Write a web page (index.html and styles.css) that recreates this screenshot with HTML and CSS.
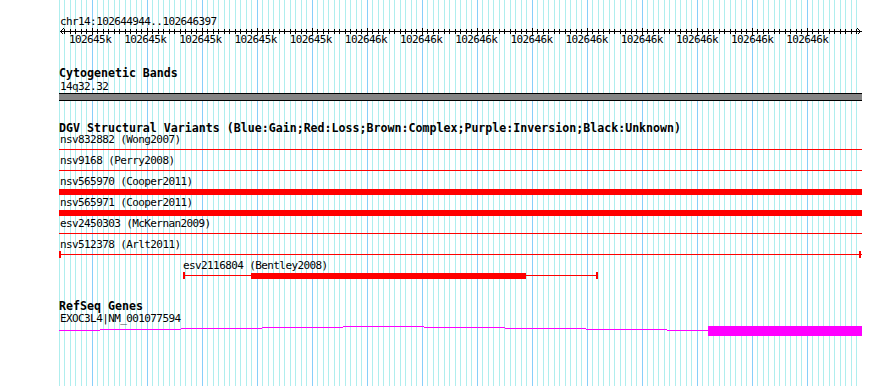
FILE: index.html
```html
<!DOCTYPE html>
<html lang="en">
<head>
<meta charset="utf-8">
<title>GBrowse details - chr14:102644944..102646397</title>
<link rel="stylesheet" href="styles.css">
</head>
<body>
<div class="canvas">
  <div class="ruler">
    <div class="locus">chr14:102644944..102646397</div>
    <svg class="axis" width="890" height="7" viewBox="0 0 890 7" shape-rendering="crispEdges">
      <defs>
        <pattern id="minor" x="59" y="0" width="11" height="7" patternUnits="userSpaceOnUse">
          <rect x="0" y="1" width="1" height="5"/>
          <rect x="5" y="1" width="1" height="5"/>
        </pattern>
        <pattern id="major" x="92" y="0" width="55" height="7" patternUnits="userSpaceOnUse">
          <rect x="0" y="0" width="1" height="7"/>
        </pattern>
      </defs>
      <rect x="64" y="0" width="793" height="7" fill="url(#minor)"/>
      <rect x="92" y="0" width="716" height="7" fill="url(#major)"/>
      <rect x="60" y="3" width="802" height="1"/>
      <path d="M63.5 0.5 L60.5 3.5 L63.5 6.5 M857.5 0.5 L860.5 3.5 L857.5 6.5" fill="none" stroke="#000" stroke-width="1"/>
    </svg>
    <div class="ticks">
      <span>102645k</span><span>102645k</span><span>102645k</span><span>102645k</span><span>102645k</span>
      <span>102646k</span><span>102646k</span><span>102646k</span><span>102646k</span><span>102646k</span>
      <span>102646k</span><span>102646k</span><span>102646k</span><span>102646k</span>
    </div>
  </div>

  <section class="track track-cyto">
    <h2 class="track-title">Cytogenetic Bands</h2>
    <div class="label label-tall">14q32.32</div>
    <div class="band"></div>
  </section>

  <section class="track track-dgv">
    <h2 class="track-title title-tight">DGV Structural Variants (Blue:Gain;Red:Loss;Brown:Complex;Purple:Inversion;Black:Unknown)</h2>
    <div class="row">
      <div class="label">nsv832882 (Wong2007)</div>
      <svg class="glyph" width="890" height="10" shape-rendering="crispEdges"><rect class="loss" x="59" y="4" width="803" height="1"/></svg>
    </div>
    <div class="row">
      <div class="label">nsv9168 (Perry2008)</div>
      <svg class="glyph" width="890" height="10" shape-rendering="crispEdges"><rect class="loss" x="59" y="4" width="803" height="1"/></svg>
    </div>
    <div class="row">
      <div class="label">nsv565970 (Cooper2011)</div>
      <svg class="glyph" width="890" height="10" shape-rendering="crispEdges"><rect class="loss" x="59" y="2" width="803" height="6"/></svg>
    </div>
    <div class="row">
      <div class="label">nsv565971 (Cooper2011)</div>
      <svg class="glyph" width="890" height="10" shape-rendering="crispEdges"><rect class="loss" x="59" y="2" width="803" height="6"/></svg>
    </div>
    <div class="row">
      <div class="label">esv2450303 (McKernan2009)</div>
      <svg class="glyph" width="890" height="10" shape-rendering="crispEdges"><rect class="loss" x="59" y="4" width="803" height="1"/></svg>
    </div>
    <div class="row">
      <div class="label">nsv512378 (Arlt2011)</div>
      <svg class="glyph" width="890" height="10" shape-rendering="crispEdges">
        <rect class="loss" x="59" y="4" width="803" height="1"/>
        <rect class="loss" x="59" y="1" width="2" height="7"/>
        <rect class="loss" x="859" y="1" width="2" height="7"/>
      </svg>
    </div>
    <div class="row">
      <div class="label label-offset">esv2116804 (Bentley2008)</div>
      <svg class="glyph" width="890" height="10" shape-rendering="crispEdges">
        <rect class="loss" x="183" y="4" width="415" height="1"/>
        <rect class="loss" x="183" y="1" width="2" height="7"/>
        <rect class="loss" x="596" y="1" width="2" height="7"/>
        <rect class="loss" x="251" y="2" width="275" height="6"/>
      </svg>
    </div>
  </section>

  <section class="track track-genes">
    <h2 class="track-title">RefSeq Genes</h2>
    <div class="label">EXOC3L4|NM_001077594</div>
    <svg class="glyph gene" width="890" height="13" shape-rendering="crispEdges">
      <path class="intron" d="M59 6.5 H100 M100 5.5 H181 M181 4.5 H262 M262 3.5 H343 M343 2.5 H424 M424 3.5 H505 M505 4.5 H586 M586 5.5 H667 M667 6.5 H708"/>
      <rect class="exon" x="708" y="2" width="154" height="10"/>
    </svg>
  </section>
</div>
</body>
</html>
```

FILE: styles.css
```css
* {
  box-sizing: border-box;
}

body {
  margin: 0;
  background: #ffffff;
}

.canvas {
  width: 890px;
  height: 386px;
  overflow: hidden;
  font-family: "DejaVu Sans Mono", "Liberation Mono", monospace;
  color: #000000;
  background-color: #ffffff;
  background-image:
    repeating-linear-gradient(to right, #87cefa 0 1px, transparent 1px 55px),
    repeating-linear-gradient(to right, #afeeee 0 1px, transparent 1px 5px, #afeeee 5px 6px, transparent 6px 11px);
  background-position: 92px 0, 59px 0;
  background-size: 716px 100%, 798px 100%;
  background-repeat: no-repeat, no-repeat;
}

.ruler {
  padding-top: 15px;
}

.locus {
  padding-left: 60px;
  font-size: 11px;
  letter-spacing: -0.6px;
  line-height: 13px;
  height: 13px;
  white-space: nowrap;
}

.axis {
  display: block;
}

.ticks {
  display: flex;
  gap: 13px;
  padding-left: 69px;
  font-size: 11px;
  letter-spacing: -0.6px;
  line-height: 9px;
  height: 9px;
  white-space: nowrap;
}

.ticks span {
  flex: 0 0 42px;
}

.track-title {
  margin: 0;
  padding-left: 59px;
  font-size: 11.62px;
  font-weight: bold;
  line-height: 13px;
  height: 13px;
  white-space: nowrap;
}

.title-tight {
  line-height: 12px;
  height: 12px;
}

.label {
  padding-left: 60px;
  font-size: 11px;
  letter-spacing: -0.6px;
  line-height: 11px;
  height: 11px;
  white-space: nowrap;
}

.label-tall {
  line-height: 13px;
  height: 13px;
}

.label-offset {
  padding-left: 183px;
}

.track-cyto {
  margin-top: 23px;
}

.band {
  margin-left: 59px;
  width: 803px;
  height: 8px;
  background: #858585;
  border-top: 1px solid #000000;
  border-bottom: 1px solid #000000;
}

.track-dgv {
  margin-top: 21px;
}

.row {
  height: 21px;
}

.glyph {
  display: block;
}

.loss {
  fill: #ff0000;
}

.track-genes {
  margin-top: 19px;
}

.intron {
  fill: none;
  stroke: #ff00ff;
  stroke-width: 1;
}

.exon {
  fill: #ff00ff;
}
```
